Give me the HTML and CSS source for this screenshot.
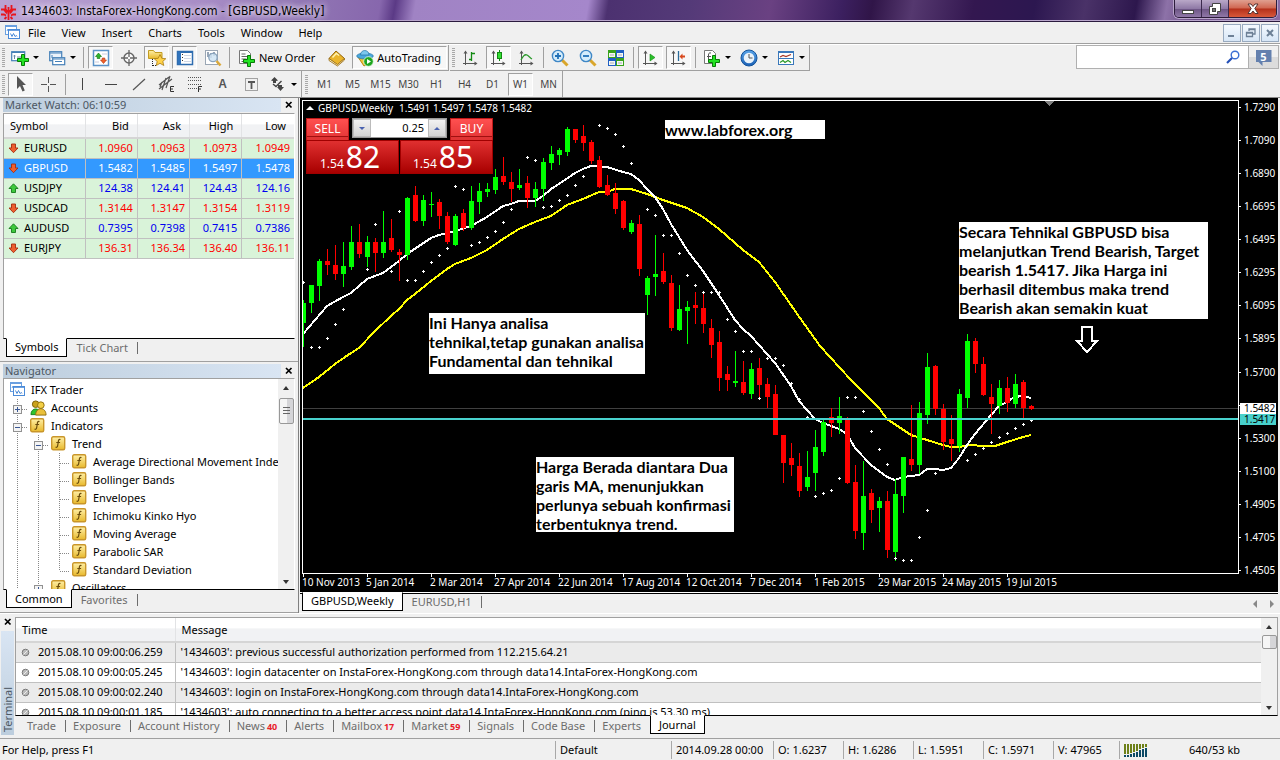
FILE: index.html
```html
<!DOCTYPE html>
<html lang="en">
<head>
<meta charset="utf-8">
<title>1434603: InstaForex-HongKong.com - [GBPUSD,Weekly]</title>
<link rel="stylesheet" href="styles.css">
</head>
<body>
<svg class="defs" aria-hidden="true">
  <defs>
    <linearGradient id="gold" x1="0" y1="0" x2="0" y2="1"><stop offset="0" stop-color="#fff0a8"/><stop offset="1" stop-color="#e8b92c"/></linearGradient>
    <linearGradient id="blue" x1="0" y1="0" x2="0" y2="1"><stop offset="0" stop-color="#5aa5ea"/><stop offset="1" stop-color="#1a5fb4"/></linearGradient>
  </defs>
  <symbol id="i-app" viewBox="0 0 15 15"><rect x=".5" y=".5" width="11" height="9" fill="#fff" stroke="#6ba0e0"/><path d="M1 1.500h10" stroke="#6ba0e0"/><path d="M2 6l1-2 1 2 1-2 1 1" stroke="#6ba0e0" fill="none"/><rect x="3.500" y="4.500" width="11" height="9" fill="#fff" stroke="#4a8ad8"/><path d="M4 5.500h10" stroke="#6ba0e0"/><path d="M5.500 8.500l1.500 3 1.500-3 1.500 3 1.500-1 .5 1" stroke="#4a8ad8" fill="none"/></symbol>
  <symbol id="i-plus" viewBox="0 0 12 12"><path d="M4.500 .5h3v4h4v3h-4v4h-3v-4h-4v-3h4z" fill="#22e322" stroke="#077a07"/></symbol>
  <symbol id="i-newchart" viewBox="0 0 18 18"><rect x=".7" y="2.700" width="13" height="9" fill="#fff" stroke="#4580b8" stroke-width="1.200"/><path d="M1 3.500h12.500" stroke="#4580b8"/><path d="M3.500 10V6M6 8h4M2.500 7h2" stroke="#6a8aa8"/><use href="#i-plus" x="6" y="5" width="12" height="12"/></symbol>
  <symbol id="i-profiles" viewBox="0 0 18 18"><rect x="1.700" y="2.700" width="12" height="9" fill="#eaf2fb" stroke="#4580b8" stroke-width="1.200"/><path d="M2 4h11M4 9V6" stroke="#4580b8"/><rect x="4.700" y="8.700" width="12" height="7" fill="#fff" stroke="#4580b8" stroke-width="1.200"/><path d="M5 10h11M7 12.500h7" stroke="#4580b8"/></symbol>
  <symbol id="i-watch" viewBox="0 0 18 18"><rect x="1.500" y="1.500" width="15" height="15" fill="#fff" stroke="#5b93c8" stroke-width="1.500"/><path d="M10 5h5M3 13h4" stroke="#ccd"/><path d="M6.500 4l3 3.500h-1.700v2h-2.600v-2h-1.700z" fill="#2cb52c" stroke="#0a700a" stroke-width=".6"/><path d="M11.500 14.500l3-3.500h-1.700v-2h-2.600v2h-1.700z" fill="#f0622a" stroke="#b03010" stroke-width=".6"/></symbol>
  <symbol id="i-target" viewBox="0 0 18 18"><circle cx="9" cy="9" r="5" fill="#f8f8f8" stroke="#666" stroke-width="1.400"/><path d="M9 1v7M9 10v7M1 9h7M10 9h7" stroke="#666" stroke-width="1.300"/></symbol>
  <symbol id="i-star" viewBox="0 0 18 18"><path d="M.5 1.500h5l1.500 2h7v6H.5z" fill="url(#gold)" stroke="#c29c22"/><path d="M4.500 10v7M5 16.500h4" stroke="#222" stroke-dasharray="1 1"/><path d="M12 5.500l1.800 3.800 4 .4-3 2.700 1 4.100-3.800-2.200-3.700 2.200.9-4.100-3-2.700 4-.4z" fill="#ffd24a" stroke="#a87b10" stroke-width=".8"/></symbol>
  <symbol id="i-panel" viewBox="0 0 18 18"><rect x="1.500" y="2.500" width="15" height="13" fill="#fff" stroke="#2f6db0" stroke-width="1.500"/><path d="M2 3.500h14" stroke="#2f6db0"/><rect x="2" y="3" width="3" height="12" fill="#2f73bd"/><path d="M8 6.500h7M8 9.500h7M8 12.500h7" stroke="#d0d8e6"/><path d="M6 5.500h1M6 8.500h1M6 11.500h1" stroke="#333"/></symbol>
  <symbol id="i-tester" viewBox="0 0 18 18"><rect x="1.500" y="1.500" width="12" height="14" fill="#fff" stroke="#9aa6b4"/><path d="M4 3v5M7 4v5M10 3v4" stroke="#7789a0" stroke-width="1.500"/><circle cx="9" cy="8.500" r="4.200" fill="#cfe4f5" fill-opacity=".85" stroke="#8aa4bd" stroke-width="1.300"/><path d="M12.500 12l4 4.500" stroke="#dba93a" stroke-width="2.600"/></symbol>
  <symbol id="i-order" viewBox="0 0 18 18"><path d="M1.500 1.500h8l3 3v10h-11z" fill="#fff" stroke="#777"/><path d="M3.500 5h4M3.500 7.500h7M3.500 10h5M3.500 12.500h3" stroke="#666"/><use href="#i-plus" x="5" y="6" width="12" height="12"/></symbol>
  <symbol id="i-book" viewBox="0 0 18 18"><path d="M1 9.500l7-7.500 8.500 7.500-7 6.500z" fill="#eab52c" stroke="#94650c"/><path d="M1 9.500v2l8.500 5.500 7-6v-1.500l-7 6z" fill="#fff0b5" stroke="#94650c" stroke-width=".8"/><path d="M4.500 8.500l3.800-4 2.800 2" stroke="#fff3b0" fill="none" stroke-width="1.500"/></symbol>
  <symbol id="i-auto" viewBox="0 0 18 18"><path d="M2 8l6 9 7-4V7z" fill="#f1c53b" stroke="#b8870f"/><ellipse cx="9" cy="7" rx="8.300" ry="3" fill="#4aa8dd" stroke="#2273a5" stroke-width=".7"/><path d="M4.500 6c0-6 8.500-6 8.500 0z" fill="#7cc8ee" stroke="#2273a5" stroke-width=".7"/><circle cx="12.500" cy="12.500" r="4.800" fill="#1ea51e" stroke="#eafbe8" stroke-width=".8"/><path d="M11 10v5l4-2.500z" fill="#fff"/></symbol>
  <symbol id="i-axes" viewBox="0 0 18 18"><path d="M4.500 3v13M2 14.500h13" stroke="#555"/><path d="M4.500 1.500l-2 3h4zM16.500 14.500l-3-2v4z" fill="#555"/></symbol>
  <symbol id="i-bars" viewBox="0 0 18 18"><use href="#i-axes"/><path d="M10.500 3v9M11 4.500h3M8 10.500h2" stroke="#128a12" stroke-width="1.300"/></symbol>
  <symbol id="i-candle" viewBox="0 0 18 18"><use href="#i-axes"/><path d="M10.500 1v11" stroke="#128a12"/><rect x="8.500" y="3.500" width="4" height="6" fill="#33dd33" stroke="#128a12"/></symbol>
  <symbol id="i-line" viewBox="0 0 18 18"><use href="#i-axes"/><path d="M4 11c2-4 4-6 6-5s3 3 5 4" fill="none" stroke="#2b992b" stroke-width="1.300"/></symbol>
  <symbol id="i-zoomin" viewBox="0 0 18 18"><path d="M11 11l5.500 5.500" stroke="#d9a62c" stroke-width="3"/><circle cx="7" cy="7" r="5.600" fill="#d4ecfb" stroke="#3f87c6" stroke-width="1.400"/><path d="M4 7h6M7 4v6" stroke="#2171b8" stroke-width="1.800"/></symbol>
  <symbol id="i-zoomout" viewBox="0 0 18 18"><path d="M11 11l5.500 5.500" stroke="#d9a62c" stroke-width="3"/><circle cx="7" cy="7" r="5.600" fill="#d4ecfb" stroke="#3f87c6" stroke-width="1.400"/><path d="M4 7h6" stroke="#2171b8" stroke-width="1.800"/></symbol>
  <symbol id="i-tile" viewBox="0 0 18 18"><path d="M1 1h8v8H1zM9 9h8v8H9z" fill="#38a31d"/><path d="M9 1h8v8H9zM1 9h8v8H1z" fill="#1f5fc4"/><path d="M2 4h6v4H2zM10 4h6v4h-6zM2 12h6v4H2zM10 12h6v4h-6z" fill="#f4f8f4"/><path d="M3 6h4M11 6h4M3 14h4M11 14h4" stroke="#aab"/></symbol>
  <symbol id="i-scroll" viewBox="0 0 18 18"><use href="#i-axes"/><path d="M9 5v7l5-3.500z" fill="#2bc02b" stroke="#128a12" stroke-width=".6"/></symbol>
  <symbol id="i-shift" viewBox="0 0 18 18"><use href="#i-axes"/><path d="M9.500 2v10" stroke="#2a6b9a" stroke-width="1.300"/><path d="M10.500 7.500l3-3v2h2.500v2h-2.500v2z" fill="#d8481c"/></symbol>
  <symbol id="i-indic" viewBox="0 0 18 18"><path d="M1.500 1.500h8l3 3v10h-11z" fill="#fff" stroke="#777"/><path d="M8 4c-2-.5-2.500.5-2.500 2v5M4 7.500h4" stroke="#555" fill="none"/><use href="#i-plus" x="5" y="6" width="12" height="12"/></symbol>
  <symbol id="i-clock" viewBox="0 0 18 18"><circle cx="9" cy="9" r="8" fill="url(#blue)" stroke="#14549c"/><circle cx="9" cy="9" r="5.300" fill="#eaf3fb"/><path d="M9 5v4h3.500" stroke="#555" fill="none"/></symbol>
  <symbol id="i-templ" viewBox="0 0 18 18"><rect x="1.500" y="2.500" width="15" height="13" fill="#fff" stroke="#3a78bb"/><path d="M1 3.500h16M2 9.500h14" stroke="#3a78bb"/><path d="M3 8l3-1.500 3 1 5-2" stroke="#a83a2a" stroke-width="1.200" fill="none"/><path d="M3 13.500l3-2 2 2 3-2 3 2" stroke="#2b992b" stroke-width="1.200" fill="none"/></symbol>
  <symbol id="i-cursor" viewBox="0 0 18 18"><path d="M5 1v13l3-3 2.500 5.500 2.300-1L10.500 10H14z" fill="#555"/></symbol>
  <symbol id="i-cross" viewBox="0 0 18 18"><path d="M8.500 2v6M8.500 11v6M1 9.500h6M10 9.500h6" stroke="#555"/></symbol>
  <symbol id="i-vline" viewBox="0 0 18 18"><path d="M8.500 3v12" stroke="#444"/></symbol>
  <symbol id="i-hline" viewBox="0 0 18 18"><path d="M3 9.500h12" stroke="#444"/></symbol>
  <symbol id="i-trend" viewBox="0 0 18 18"><path d="M3 15L15 4" stroke="#555" stroke-width="1.200"/></symbol>
  <symbol id="i-channel" viewBox="0 0 18 18"><path d="M1 10L11 2M1 14L14 4M4 15l4-12M8 13l4-12M2 12l2-5" stroke="#555" stroke-width="1.200"/><path d="M16 11.500h-3.500v5H16M12.500 14H15" fill="none" stroke="#333"/></symbol>
  <symbol id="i-fibo" viewBox="0 0 18 18"><path d="M2 2.500h14M2 5.500h14M2 9.500h14M2 13.500h9" stroke="#555" stroke-dasharray="1 1"/><path d="M12.500 17v-5.500H16M12.500 14H15" fill="none" stroke="#333"/></symbol>
  <symbol id="i-label" viewBox="0 0 18 18"><rect x="3.500" y="3.500" width="12" height="12" fill="none" stroke="#555" stroke-dasharray="1 1"/><path d="M6 7h7M9.500 7v7" stroke="#555" stroke-width="1.800"/></symbol>
  <symbol id="i-arrows" viewBox="0 0 18 18"><path d="M2 5.500L5.500 2 9 5.500 7 6v2H4V6zM8 12h1v-2h4v2h2l-3.500 4z" fill="#444"/><path d="M4 9l3 2.500L12.500 6" stroke="#444" stroke-width="1.400" fill="none"/></symbol>
  <symbol id="i-up" viewBox="0 0 11 11"><path d="M5.500 .8l4.500 4.700H7.500v4h-4v-4H1z" fill="#3ec93e" stroke="#14781a" stroke-width=".9"/></symbol>
  <symbol id="i-down" viewBox="0 0 11 11"><path d="M5.500 9.700L1 5h2.500V1h4v4H10z" fill="#ee6030" stroke="#a52c10" stroke-width=".9"/></symbol>
  <symbol id="i-fx" viewBox="0 0 15 15"><rect x=".7" y=".7" width="13" height="13" rx="1.500" fill="url(#gold)" stroke="#c9962a" stroke-width="1.400"/><path d="M9.500 3.500c-2-.6-2 1-2.300 3L6.600 10c-.2 1-.8 1.500-2 1.200M5.300 6.500h3.800" stroke="#6b4d0c" stroke-width="1.200" fill="none"/></symbol>
  <symbol id="i-people" viewBox="0 0 18 16"><circle cx="6" cy="4" r="3.500" fill="#c9a21c" stroke="#7a5c08"/><path d="M1 15c0-8 10-8 10 0z" fill="#2ec42e" stroke="#11801a"/><circle cx="11.500" cy="5" r="3.500" fill="#f3cf45" stroke="#8f6d0e"/><path d="M6 15.500c0-9 11-9 11 0z" fill="#eac03a" stroke="#8f6d0e"/></symbol>
  <symbol id="g-line" viewBox="0 0 21 18"><path d="M10.500 0v18" stroke="#888" stroke-dasharray="1 1"/></symbol>
  <symbol id="g-tee" viewBox="0 0 21 18"><path d="M10.500 0v18M11 10.500h10" stroke="#888" stroke-dasharray="1 1"/></symbol>
  <symbol id="g-end" viewBox="0 0 21 18"><path d="M10.500 0v10M11 10.500h10" stroke="#888" stroke-dasharray="1 1"/></symbol>
  <symbol id="g-minus" viewBox="0 0 21 18"><use href="#g-tee"/><rect x="6.500" y="6.500" width="8" height="8" fill="#f4f4f4" stroke="#919191"/><path d="M8 10.500h5" stroke="#3a5794"/></symbol>
  <symbol id="g-plus" viewBox="0 0 21 18"><use href="#g-minus"/><path d="M10.500 8v5" stroke="#3a5794"/></symbol>
  <symbol id="i-dot" viewBox="0 0 9 9"><circle cx="4.500" cy="4.500" r="3.300" fill="#bbb" stroke="#777"/><path d="M2.500 6.500l4-4" stroke="#eee"/></symbol>
  <symbol id="i-x" viewBox="0 0 8 8"><path d="M1 1l5.500 5.500M6.500 1L1 6.500" stroke="currentColor" stroke-width="1.700"/></symbol>
</svg>

<div class="app">
  <header class="titlebar">
    <svg class="logo" viewBox="0 0 18 18"><path d="M8.500 5v13M5.500 3v4l2 3M11.500 3v4l-2 3M1 7.500h3l3 4M16 7.500h-3l-3 4M1 12.500h3l2 1M16 12.500h-3l-2 1M4.500 17l2-2M12.500 17l-2-2" fill="none" stroke="#e8151c" stroke-width="1.800"/></svg>
    <h1>1434603: InstaForex-HongKong.com - [GBPUSD,Weekly]</h1>
    <div class="wincontrols">
      <button type="button" aria-label="Minimize"><svg viewBox="0 0 12 12"><rect x=".5" y="7.500" width="11" height="3" fill="#fff" stroke="#444"/></svg></button>
      <button type="button" aria-label="Restore"><svg viewBox="0 0 12 12"><path d="M3.500 .5h8v8h-3v3h-8v-8h3z" fill="#fff" stroke="#444"/><rect x="3.500" y="5.500" width="3" height="3" fill="#777" stroke="#444"/></svg></button>
      <button type="button" class="close" aria-label="Close"><svg viewBox="0 0 12 12"><path d="M1 1l3 0 2 2.500L8 1h3L7.800 5.500 11 10.500H8L6 8l-2 2.500H1l3.200-5z" fill="#fff" stroke="#533"/></svg></button>
    </div>
  </header>

  <nav class="menubar">
    <svg class="mdi-icon"><use href="#i-app"/></svg>
    <button type="button">File</button><button type="button">View</button><button type="button">Insert</button><button type="button">Charts</button><button type="button">Tools</button><button type="button">Window</button><button type="button">Help</button>
    <div class="mdi">
      <button type="button" aria-label="Minimize chart"><svg viewBox="0 0 12 12"><path d="M2 9h6" stroke="#6d8096" stroke-width="2"/></svg></button>
      <button type="button" aria-label="Restore chart"><svg viewBox="0 0 12 12"><path d="M4 4V2h6v5H8M4 2.500h6" fill="none" stroke="#6d8096" stroke-width="1.300"/><path d="M1.500 5.500h6v4h-6zM2 6h5" fill="none" stroke="#6d8096" stroke-width="1.300"/></svg></button>
      <button type="button" aria-label="Close chart"><svg viewBox="0 0 12 12"><path d="M3 3l6 6M9 3l-6 6" stroke="#6d8096" stroke-width="2"/></svg></button>
    </div>
  </nav>

  <div class="toolbars">
    <div class="toolrow">
      <div class="toolbar" role="toolbar" aria-label="Standard">
        <i class="grip"></i>
        <button type="button" class="tb drop" aria-label="New chart"><svg><use href="#i-newchart"/></svg></button>
        <button type="button" class="tb drop" aria-label="Profiles"><svg><use href="#i-profiles"/></svg></button>
        <i class="sep"></i>
        <button type="button" class="tb on" aria-label="Market Watch"><svg><use href="#i-watch"/></svg></button>
        <button type="button" class="tb" aria-label="Data Window"><svg><use href="#i-target"/></svg></button>
        <button type="button" class="tb on" aria-label="Navigator"><svg><use href="#i-star"/></svg></button>
        <button type="button" class="tb on" aria-label="Terminal"><svg><use href="#i-panel"/></svg></button>
        <button type="button" class="tb" aria-label="Strategy Tester"><svg><use href="#i-tester"/></svg></button>
        <i class="sep"></i>
        <button type="button" class="tb text"><svg><use href="#i-order"/></svg>New Order</button>
        <button type="button" class="tb" aria-label="MetaEditor"><svg><use href="#i-book"/></svg></button>
        <button type="button" class="tb text on"><svg><use href="#i-auto"/></svg>AutoTrading</button>
      </div>
      <div class="toolbar" role="toolbar" aria-label="Charts">
        <i class="grip"></i>
        <button type="button" class="tb" aria-label="Bar chart"><svg><use href="#i-bars"/></svg></button>
        <button type="button" class="tb on" aria-label="Candlesticks"><svg><use href="#i-candle"/></svg></button>
        <button type="button" class="tb" aria-label="Line chart"><svg><use href="#i-line"/></svg></button>
        <i class="sep"></i>
        <button type="button" class="tb" aria-label="Zoom in"><svg><use href="#i-zoomin"/></svg></button>
        <button type="button" class="tb" aria-label="Zoom out"><svg><use href="#i-zoomout"/></svg></button>
        <button type="button" class="tb" aria-label="Tile windows"><svg><use href="#i-tile"/></svg></button>
        <i class="sep"></i>
        <button type="button" class="tb on" aria-label="Auto scroll"><svg><use href="#i-scroll"/></svg></button>
        <button type="button" class="tb on" aria-label="Chart shift"><svg><use href="#i-shift"/></svg></button>
        <i class="sep"></i>
        <button type="button" class="tb drop" aria-label="Indicators"><svg><use href="#i-indic"/></svg></button>
        <button type="button" class="tb drop" aria-label="Periods"><svg><use href="#i-clock"/></svg></button>
        <button type="button" class="tb drop" aria-label="Templates"><svg><use href="#i-templ"/></svg></button>
      </div>
      <form class="search">
        <input type="text" aria-label="Search">
        <button type="button" class="find" aria-label="Find"><svg viewBox="0 0 14 14"><circle cx="9" cy="5" r="3.800" fill="#fff" stroke="#3b6fd4" stroke-width="1.400"/><path d="M6 8l-5 5" stroke="#2450b8" stroke-width="2.200"/></svg></button>
        <button type="button" class="chat"><span>5</span></button>
      </form>
    </div>
    <div class="toolrow">
      <div class="toolbar" role="toolbar" aria-label="Line studies">
        <i class="grip"></i>
        <button type="button" class="tb on" aria-label="Cursor"><svg><use href="#i-cursor"/></svg></button>
        <button type="button" class="tb" aria-label="Crosshair"><svg><use href="#i-cross"/></svg></button>
        <i class="sep"></i>
        <button type="button" class="tb" aria-label="Vertical line"><svg><use href="#i-vline"/></svg></button>
        <button type="button" class="tb" aria-label="Horizontal line"><svg><use href="#i-hline"/></svg></button>
        <button type="button" class="tb" aria-label="Trendline"><svg><use href="#i-trend"/></svg></button>
        <button type="button" class="tb" aria-label="Equidistant channel"><svg><use href="#i-channel"/></svg></button>
        <button type="button" class="tb" aria-label="Fibonacci retracement"><svg><use href="#i-fibo"/></svg></button>
        <button type="button" class="tb letter">A</button>
        <button type="button" class="tb" aria-label="Text label"><svg><use href="#i-label"/></svg></button>
        <button type="button" class="tb drop" aria-label="Arrows"><svg><use href="#i-arrows"/></svg></button>
      </div>
      <div class="toolbar periods" role="toolbar" aria-label="Periodicity">
        <i class="grip"></i>
        <button type="button" class="tb">M1</button><button type="button" class="tb">M5</button><button type="button" class="tb">M15</button><button type="button" class="tb">M30</button><button type="button" class="tb">H1</button><button type="button" class="tb">H4</button><button type="button" class="tb">D1</button><button type="button" class="tb on">W1</button><button type="button" class="tb">MN</button>
      </div>
    </div>
  </div>

  <main class="workspace">
    <aside class="side">
      <section class="panel watch">
        <header class="panel-head"><h2>Market Watch: 06:10:59</h2><button type="button" aria-label="Close Market Watch"><svg><use href="#i-x"/></svg></button></header>
        <div class="panel-body">
          <table class="quotes">
            <thead><tr><th>Symbol</th><th>Bid</th><th>Ask</th><th>High</th><th>Low</th></tr></thead>
            <tbody>
              <tr class="dn"><td><svg><use href="#i-down"/></svg>EURUSD</td><td>1.0960</td><td>1.0963</td><td>1.0973</td><td>1.0949</td></tr>
              <tr class="sel"><td><svg><use href="#i-down"/></svg>GBPUSD</td><td>1.5482</td><td>1.5485</td><td>1.5497</td><td>1.5478</td></tr>
              <tr class="up"><td><svg><use href="#i-up"/></svg>USDJPY</td><td>124.38</td><td>124.41</td><td>124.43</td><td>124.16</td></tr>
              <tr class="dn"><td><svg><use href="#i-down"/></svg>USDCAD</td><td>1.3144</td><td>1.3147</td><td>1.3154</td><td>1.3119</td></tr>
              <tr class="up"><td><svg><use href="#i-up"/></svg>AUDUSD</td><td>0.7395</td><td>0.7398</td><td>0.7415</td><td>0.7386</td></tr>
              <tr class="dn"><td><svg><use href="#i-down"/></svg>EURJPY</td><td>136.31</td><td>136.34</td><td>136.40</td><td>136.11</td></tr>
            </tbody>
          </table>
        </div>
        <div class="tabs"><button type="button" class="active">Symbols</button><button type="button">Tick Chart</button></div>
      </section>
      <section class="panel navigator">
        <header class="panel-head"><h2>Navigator</h2><button type="button" aria-label="Close Navigator"><svg><use href="#i-x"/></svg></button></header>
        <div class="panel-body">
          <ul class="tree">
            <li><svg class="ico"><use href="#i-app"/></svg>IFX Trader</li>
            <li><svg class="g"><use href="#g-plus"/></svg><svg class="ico people"><use href="#i-people"/></svg>Accounts</li>
            <li><svg class="g"><use href="#g-minus"/></svg><svg class="ico"><use href="#i-fx"/></svg>Indicators</li>
            <li><svg class="g"><use href="#g-line"/></svg><svg class="g"><use href="#g-minus"/></svg><svg class="ico"><use href="#i-fx"/></svg>Trend</li>
            <li><svg class="g"><use href="#g-line"/></svg><svg class="g"><use href="#g-line"/></svg><svg class="g"><use href="#g-tee"/></svg><svg class="ico"><use href="#i-fx"/></svg>Average Directional Movement Index</li>
            <li><svg class="g"><use href="#g-line"/></svg><svg class="g"><use href="#g-line"/></svg><svg class="g"><use href="#g-tee"/></svg><svg class="ico"><use href="#i-fx"/></svg>Bollinger Bands</li>
            <li><svg class="g"><use href="#g-line"/></svg><svg class="g"><use href="#g-line"/></svg><svg class="g"><use href="#g-tee"/></svg><svg class="ico"><use href="#i-fx"/></svg>Envelopes</li>
            <li><svg class="g"><use href="#g-line"/></svg><svg class="g"><use href="#g-line"/></svg><svg class="g"><use href="#g-tee"/></svg><svg class="ico"><use href="#i-fx"/></svg>Ichimoku Kinko Hyo</li>
            <li><svg class="g"><use href="#g-line"/></svg><svg class="g"><use href="#g-line"/></svg><svg class="g"><use href="#g-tee"/></svg><svg class="ico"><use href="#i-fx"/></svg>Moving Average</li>
            <li><svg class="g"><use href="#g-line"/></svg><svg class="g"><use href="#g-line"/></svg><svg class="g"><use href="#g-tee"/></svg><svg class="ico"><use href="#i-fx"/></svg>Parabolic SAR</li>
            <li><svg class="g"><use href="#g-line"/></svg><svg class="g"><use href="#g-line"/></svg><svg class="g"><use href="#g-end"/></svg><svg class="ico"><use href="#i-fx"/></svg>Standard Deviation</li>
            <li><svg class="g"><use href="#g-line"/></svg><svg class="g"><use href="#g-plus"/></svg><svg class="ico"><use href="#i-fx"/></svg>Oscillators</li>
          </ul>
          <div class="scrollbar"><i class="arr up"></i><i class="thumb tall"></i><i class="arr down"></i></div>
        </div>
        <div class="tabs"><button type="button" class="active">Common</button><button type="button">Favorites</button></div>
      </section>
    </aside>

    <section class="chart">
      <div class="frame">
        <div class="plot">
          <svg id="series" class="series"></svg>
          <div class="caption"><span>GBPUSD,Weekly</span><span>1.5491 1.5497 1.5478 1.5482</span></div>
          <div class="trade">
            <button type="button" class="side-btn">SELL</button>
            <div class="lots"><button type="button" aria-label="Decrease volume"><i class="arr down"></i></button><input type="text" value="0.25" aria-label="Volume"><button type="button" aria-label="Increase volume"><i class="arr up"></i></button></div>
            <button type="button" class="side-btn">BUY</button>
            <button type="button" class="price"><span>1.54</span><b>82</b></button>
            <button type="button" class="price"><span>1.54</span><b>85</b></button>
          </div>
          <p class="note n1">www.labforex.org</p>
          <p class="note n2">Ini Hanya analisa<br>tehnikal,tetap gunakan analisa<br>Fundamental dan tehnikal</p>
          <p class="note n3">Harga Berada diantara Dua<br>garis MA, menunjukkan<br>perlunya sebuah konfirmasi<br>terbentuknya trend.</p>
          <p class="note n4">Secara Tehnikal GBPUSD bisa<br>melanjutkan Trend Bearish, Target<br>bearish 1.5417. Jika Harga ini<br>berhasil ditembus maka trend<br>Bearish akan semakin kuat</p>
        </div>
        <div class="prices">
          <span>1.7290</span><span>1.7090</span><span>1.6890</span><span>1.6695</span><span>1.6495</span><span>1.6295</span><span>1.6095</span><span>1.5895</span><span>1.5700</span><span>&nbsp;</span><span>1.5300</span><span>1.5100</span><span>1.4905</span><span>1.4705</span><span>1.4505</span>
          <div class="tags"><b>1.5482</b><b class="level">1.5417</b></div>
        </div>
        <div class="dates"><span>10 Nov 2013</span><span>5 Jan 2014</span><span>2 Mar 2014</span><span>27 Apr 2014</span><span>22 Jun 2014</span><span>17 Aug 2014</span><span>12 Oct 2014</span><span>7 Dec 2014</span><span>1 Feb 2015</span><span>29 Mar 2015</span><span>24 May 2015</span><span>19 Jul 2015</span></div>
      </div>
      <div class="tabs"><button type="button" class="active">GBPUSD,Weekly</button><button type="button">EURUSD,H1</button><span class="pager"><i class="arr left"></i><i class="arr right"></i></span></div>
    </section>
  </main>

  <section class="terminal">
    <div class="strip"><button type="button" aria-label="Close Terminal"><svg><use href="#i-x"/></svg></button><h2>Terminal</h2></div>
    <div class="term-main">
      <div class="term-body">
        <div class="log-wrap">
          <table class="log">
            <thead><tr><th>Time</th><th>Message</th></tr></thead>
            <tbody>
              <tr><td><svg><use href="#i-dot"/></svg>2015.08.10 09:00:06.259</td><td>'1434603': previous successful authorization performed from 112.215.64.21</td></tr>
              <tr><td><svg><use href="#i-dot"/></svg>2015.08.10 09:00:05.245</td><td>'1434603': login datacenter on InstaForex-HongKong.com through data14.IntaForex-HongKong.com</td></tr>
              <tr><td><svg><use href="#i-dot"/></svg>2015.08.10 09:00:02.240</td><td>'1434603': login on InstaForex-HongKong.com through data14.IntaForex-HongKong.com</td></tr>
              <tr><td><svg><use href="#i-dot"/></svg>2015.08.10 09:00:01.185</td><td>'1434603': auto connecting to a better access point data14.IntaForex-HongKong.com (ping is 53.30 ms)</td></tr>
            </tbody>
          </table>
        </div>
        <div class="scrollbar"><i class="arr up"></i><i class="thumb"></i><i class="arr down"></i></div>
      </div>
      <div class="tabs"><button type="button">Trade</button><button type="button">Exposure</button><button type="button">Account History</button><button type="button">News <b>40</b></button><button type="button">Alerts</button><button type="button">Mailbox <b>17</b></button><button type="button">Market <b>59</b></button><button type="button">Signals</button><button type="button">Code Base</button><button type="button">Experts</button><button type="button" class="active">Journal</button></div>
    </div>
  </section>

  <footer class="status">
    <span class="help">For Help, press F1</span><span class="c1">Default</span><span class="c2">2014.09.28 00:00</span><span class="c3">O: 1.6237</span><span class="c3">H: 1.6286</span><span class="c3">L: 1.5951</span><span class="c3">C: 1.5971</span><span class="c4">V: 47965</span>
    <span class="net"><svg viewBox="0 0 24 14" shape-rendering="crispEdges"><path d="M1 1v10M4 1v10M7 1v9M10 1v8M13 1v7M16 1v5M19 1v4M22 1v3" stroke="#6d8018" stroke-width="2"/><path d="M1 12v2M4 12v2M7 11v3M10 10v4M13 9v5M16 7v7M19 6v8M22 5v9" stroke="#0d4a66" stroke-width="2"/></svg>640/53 kb</span>
  </footer>
</div>
<script src="chart.js"></script>
</body>
</html>
```
FILE: styles.css
```css
* { box-sizing: border-box; }
body { margin: 0; background: #f0f0f0; color: #000; font: 11px/14px "Noto Sans", sans-serif; }
h1, h2, p, ul { margin: 0; padding: 0; font-weight: normal; font-size: inherit; }
button, input { font: inherit; color: inherit; margin: 0; padding: 0; border: 0; background: none; white-space: nowrap; }
svg { display: block; flex: none; }
.defs { position: absolute; width: 0; height: 0; }
.app { display: flex; flex-direction: column; height: 100vh; min-height: 600px; overflow: hidden; }

.titlebar { display: flex; align-items: center; height: 22px; flex: none; border-bottom: 1px solid #2b1b3f; box-shadow: inset 0 -1px #b9a6cc;
  background: linear-gradient(100deg, #b9a2d2 0, #a88dc6 200px, #9176b4 300px, #8767ad 375px, #5b3a86 390px, #a083c4 410px, #a587cb 580px, #4c3170 600px, #543a78 680px, #6a4182 760px, #3c2060 830px, #301548 860px, #55386f 900px, #331750 960px, #2c1750 1020px, #4a3268 1070px, #2d174d 1120px, #8d72a8 1150px, #6c4d86 1180px, #8a6ca5 100%); }
.logo { width: 18px; height: 18px; }
.titlebar h1 { padding-left: 3px; font: 12px/20px "DejaVu Sans Condensed", "Noto Sans", sans-serif; text-shadow: 0 0 6px #fff, 0 0 6px #e8dcf4; }
.wincontrols { display: flex; align-self: flex-start; margin-left: auto; margin-right: 3px; height: 18px; border: 1px solid #2d1d3c; border-top: 0; border-radius: 0 0 5px 5px; overflow: hidden; box-shadow: 0 0 0 1px #b8a4ca; }
.wincontrols button { display: grid; place-items: center; width: 27px; background: linear-gradient(#b9a8c8, #8f7aa6 50%, #6c5484 52%, #9078a8); border-right: 1px solid #3b2a4d; }
.wincontrols .close { width: 47px; border: 0; background: linear-gradient(#e0a090, #d06650 48%, #b4301a 52%, #d8583a); }
.wincontrols svg { width: 12px; height: 12px; }

.menubar { display: flex; align-items: center; height: 22px; flex: none; padding-left: 5px; border-bottom: 1px solid #a0a0a0; }
.mdi-icon { width: 15px; height: 15px; }
.menubar > button { padding: 0 8px; }
.mdi { display: flex; gap: 1px; margin-left: auto; margin-right: 1px; }
.mdi button { display: grid; place-items: center; width: 18px; height: 18px; border: 1px solid #98aabf; background: linear-gradient(#f4f9fe, #d7e6f6); }
.mdi svg { width: 12px; height: 12px; }

.toolbars { flex: none; border-bottom: 1px solid #8a8a8a; border-top: 1px solid #fff; }
.toolrow { display: flex; height: 26px; }
.toolbar { display: flex; align-items: center; gap: 3px; padding: 0 1px 0 2px; border-right: 1px solid #a0a0a0; border-bottom: 1px solid #a0a0a0; margin-right: 1px; }
.toolrow + .toolrow .toolbar { border-bottom: 0; }
.grip { width: 3px; height: 19px; background: repeating-linear-gradient(#a8a8a8 0 1px, #f0f0f0 1px 2px); }
.sep { width: 1px; height: 21px; margin: 0 1px; background: #a0a0a0; }
.tb { display: flex; align-items: center; justify-content: center; width: 25px; height: 23px; border: 1px solid transparent; }
.tb svg { width: 18px; height: 18px; }
.tb.on { background: #f7f7f7; border-color: #a0a0a0 #fff #fff #a0a0a0; }
.tb.drop { width: 34px; gap: 4px; }
.tb.drop::after { content: ""; border: 3px solid transparent; border-top-color: #000; border-bottom: 0; }
.tb.text { width: auto; gap: 3px; padding: 0 5px 0 3px; }
.tb.letter { color: #555; font: bold 12px/14px "Liberation Sans", sans-serif; }
.periods .tb { color: #444; font-size: 10px; }
.periods .grip { margin-right: 1px; }
.search { display: flex; width: 203px; height: 24px; margin: 0 1px 0 auto; border: 1px solid #b0b0b0; background: #fff; }
.search input { flex: 1; min-width: 0; outline: 0; padding: 0 4px; }
.find { width: 22px; }
.find svg { width: 14px; height: 14px; }
.chat { display: flex; justify-content: center; align-items: flex-start; width: 30px; padding-top: 4px; border-left: 1px solid #b0b0b0; background: linear-gradient(#f0f0f0 50%, #dcdcdc 50%); }
.chat span { width: 16px; height: 16px; background: #6480ae; color: #fff; font-weight: bold; line-height: 13px; clip-path: polygon(0 0, 100% 0, 100% 12px, 7px 12px, 7px 16px, 3px 12px, 0 12px); }

.workspace { display: flex; flex: 1; min-height: 0; border-bottom: 1px solid #fff; }
.side { display: flex; flex-direction: column; width: 299px; flex: none; border-right: 1px solid #808080; }
.panel { display: flex; flex-direction: column; min-height: 0; padding: 0 3px; border-bottom: 1px solid #a0a0a0; }
.watch { flex: 265 1 0; }
.navigator { flex: 250 1 0; padding-top: 2px; }
.panel-head { display: flex; align-items: center; justify-content: space-between; height: 14px; flex: none; }
.watch .panel-head { margin-bottom: 1px; }
.panel-head h2 { flex: 1; padding-left: 2px; margin-right: 4px; color: #4c5763; line-height: 14px; background: linear-gradient(90deg, #bccddd, #d9e5f3); }
.panel-head button, .strip button { width: 8px; height: 8px; margin-right: 2px; }
.panel-head svg, .strip svg { width: 8px; height: 8px; }
.panel-body { display: flex; flex: 1; min-height: 0; overflow: hidden; background: #fff; border: 1px solid #a0a0a0; border-right-color: #fff; border-bottom: 1px solid #000; }
.quotes, .log { border-collapse: collapse; table-layout: fixed; width: 100%; align-self: flex-start; }
th { height: 24px; padding: 0 8px 0 0; font-weight: normal; text-align: right; background: linear-gradient(#fff 45%, #f1f2f4 46%); border-right: 1px solid #e2e3e5; border-bottom: 2px solid #d5d5d5; }
th:first-child, .log th { text-align: left; padding-left: 6px; }
td { height: 20px; padding: 0; overflow: hidden; white-space: nowrap; border-right: 1px solid #c0c0c0; border-bottom: 1px solid #c0c0c0; }
td:last-child, th:last-child { border-right: 0; }
.quotes th:first-child { width: 81px; }
.quotes td { text-align: right; padding-right: 4px; background: #d9f3d9; }
.quotes td:first-child { text-align: left; color: #000; }
td svg { display: inline-block; vertical-align: -2px; width: 11px; height: 11px; margin: 0 5px 0 4px; }
.up td { color: #0000f0; }
.dn td { color: #f00; }
.quotes .sel td, .quotes .sel td:first-child { background: #3399ff; color: #fff; }

.tabs { display: flex; align-items: center; height: 22px; flex: none; padding-left: 3px; color: #6d6d6d; }
.tabs button { display: flex; align-items: center; height: 18px; margin-top: -3px; padding: 0 9px 0 8px; }
.tabs button:not(.active)::after { content: ""; width: 1px; height: 12px; margin: 0 -10px 0 9px; background: #6d6d6d; }
.tabs .active { height: 19px; margin-top: -5px; padding: 0 8px; color: #000; background: #fff; border: 1px solid #000; border-top-color: #fff; }
.tabs .active + button { padding-left: 9px; }

.tree { flex: 1; min-width: 0; list-style: none; padding: 2px 0 0 6px; overflow: hidden; }
.tree li { display: flex; align-items: center; height: 18px; overflow: hidden; white-space: nowrap; }
.g { width: 21px; height: 18px; }
.g:first-child { margin-left: -3px; }
.ico { width: 15px; height: 15px; margin-right: 6px; }
.ico.people { width: 17px; height: 16px; margin-right: 4px; }
.g + .ico { margin-left: 2px; }
.scrollbar { display: flex; flex-direction: column; align-items: center; width: 16px; flex: none; background: #f0f0f0; padding: 7px 0 5px; }
.scrollbar .arr.down { margin-top: auto; }
.arr { width: 0; height: 0; border: 4px solid transparent; }
.arr.up { border-bottom-color: #333; border-top: 0; }
.arr.down { border-top-color: #333; border-bottom: 0; }
.scrollbar .arr { border-left-width: 3px; border-right-width: 3px; }
.arr.left { border-right-color: #888; border-left: 0; }
.arr.right { border-left-color: #888; border-right: 0; }
.thumb { width: 15px; height: 14px; margin-top: 6px; border: 1px solid #989898; border-radius: 2px; background: linear-gradient(90deg, #f5f5f5 50%, #d5d5d8 52%); }
.thumb.tall { height: 26px; margin-top: 8px; background: repeating-linear-gradient(#666 0 1px, transparent 1px 3px) 3px 8px / 7px 9px no-repeat, linear-gradient(90deg, #f5f5f5 50%, #d5d5d8 52%); }

.chart { display: flex; flex-direction: column; flex: 1; min-width: 0; margin-left: 1px; margin-right: 2px; }
.frame { display: grid; grid-template: minmax(0, 1fr) 18px / minmax(0, 1fr) 39px; flex: 1; min-height: 0; padding: 2px 0 0 2px; background: #000; color: #fff; font-size: 10px; box-shadow: 0 1px #fff, 0 2px #000; }
.plot { position: relative; overflow: hidden; border: 1px solid #fff; font-size: 11px; }
.series { position: absolute; inset: 0; width: 100%; height: 100%; shape-rendering: crispEdges; }
.caption { position: absolute; left: 3px; top: 0; display: flex; align-items: center; gap: 6px; font-size: 10px; }
.caption::before { content: ""; border: 4px solid transparent; border-bottom-color: #fff; border-top: 0; margin-right: -2px; }
.trade { position: absolute; left: 3px; top: 17px; display: grid; grid-template: 22px 34px / 43px 101px 43px; width: 187px; color: #fff; }
.side-btn { padding-bottom: 2px; background: linear-gradient(#ff5050, #e23434); font-size: 12px; border: 1px solid #c01818; border-bottom: 0; box-shadow: inset 0 -3px #e03434, inset 0 -4px #a01010; }
.lots { display: flex; height: 20px; margin: 0 3px; border: 1px solid #999; background: #fff; color: #000; }
.lots button { display: grid; place-items: center; width: 18px; background: linear-gradient(#f2f2f2, #d4d4d4); border: 1px solid #bbb; }
.lots .arr { border-width: 3px; }
.lots .arr.down { border-top-color: #4a62b0; border-bottom: 0; }
.lots .arr.up { border-bottom-color: #4a62b0; border-top: 0; }
.lots input { flex: 1; min-width: 0; text-align: right; padding-right: 4px; }
.price { grid-row: 2; grid-column: 1 / 3; display: flex; align-items: baseline; gap: 2px; width: 93px; padding-left: 13px; background: linear-gradient(#e03030, #a80000); border: 1px solid #a00000; font-size: 12px; line-height: 32px; }
.price + .price { grid-column: 2 / 4; justify-self: end; padding-left: 12px; }
.price b { font-weight: normal; font-size: 30px; }
.note { position: absolute; background: #fff; color: #000; font: bold 16px/19px Lato, sans-serif; white-space: nowrap; }
.n1 { left: 362px; top: 19px; width: 160px; }
.n2 { left: 126px; top: 212px; width: 216px; height: 61px; }
.n3 { left: 233px; top: 356px; width: 198px; height: 75px; }
.n4 { left: 656px; top: 121px; width: 249px; height: 97px; }
.prices { position: relative; display: flex; flex-direction: column; justify-content: space-between; height: calc(100% + 2px); margin-top: 1px; line-height: 13px; }
.prices > span { display: flex; align-items: center; gap: 3px; }
.prices > span::before { content: ""; width: 2px; height: 1px; background: #fff; }
.tags { position: absolute; left: 1px; right: 2px; top: 302px; line-height: 11px; color: #000; }
.tags b { display: block; padding-left: 4px; font-weight: normal; background: #fff; }
.tags .level { background: #48d1cc; }
.dates { display: flex; line-height: 15px; }
.dates span { position: relative; width: 64px; flex: none; padding-top: 1px; white-space: nowrap; }
.dates span::before { content: ""; position: absolute; left: 1px; top: 0; width: 1px; height: 3px; background: #fff; }
.chart .tabs { height: 21px; padding-left: 2px; padding-top: 2px; }
.pager { display: flex; gap: 13px; margin-left: auto; margin-right: 4px; }

.terminal { display: flex; height: 125px; flex: none; padding-top: 3px; border-bottom: 1px solid #a0a0a0; }
.strip { display: flex; flex-direction: column; align-items: center; width: 15px; flex: none; }
.strip button { margin: 1px 0 5px; }
.strip h2 { flex: 1; writing-mode: vertical-rl; transform: rotate(180deg); width: 13px; margin-bottom: 3px; padding-top: 3px; line-height: 13px; color: #4c5763; background: linear-gradient(#bccddd, #d9e5f3); }
.term-main { display: flex; flex-direction: column; flex: 1; min-width: 0; }
.term-body { display: flex; flex: 1; min-height: 0; border: 1px solid #a0a0a0; border-bottom: 1px solid #000; background: #fff; margin-right: 2px; }
.log-wrap { flex: 1; min-width: 0; overflow: hidden; }
.log th:first-child { width: 159px; }
.log td:last-child { padding-left: 5px; }
.log tr:nth-child(odd) td { background: #ebebeb; }
.log td svg { width: 9px; height: 9px; margin: 0 8px 0 5px; vertical-align: -1px; }
.terminal .tabs { padding-left: 4px; }
.terminal .tabs b { color: #e8202a; font-size: 9px; margin: 3px 0 0 2px; }

.status { display: flex; align-items: center; height: 21px; flex: none; padding-left: 2px; }
.status span { display: flex; align-items: center; height: 18px; padding-left: 4px; border-left: 1px solid #a8a8a8; }
.status .help { flex: 1; padding: 0; border: 0; }
.status .c1 { width: 116px; }
.status .c2 { width: 102px; }
.status .c3 { width: 70px; }
.status .c4 { width: 66px; }
.status .net { width: 161px; gap: 41px; }
.net svg { width: 24px; height: 14px; }
```
FILE: chart.js
```js
// Coordinates are in thirds of a pixel, measured from the plot origin shifted by (9, 18).
const NS = 'http://www.w3.org/2000/svg';
const svg = document.getElementById('series');
const X0 = 9, Y0 = 18;
const px = v => Math.round((v - X0) / 3);
const py = v => Math.round((v - Y0) / 3);
function add(name, attrs) {
  const el = document.createElementNS(NS, name);
  for (const k in attrs) el.setAttribute(k, attrs[k]);
  svg.appendChild(el);
}
// u = rising, d = falling; high, body top, body bottom, low
const candles = `u615,625,683,755 u570,570,624,654 u492,498,573,617 d462,498,510,540 d450,510,537,555 u441,513,537,575
u393,441,516,525 d387,441,477,488 u423,441,486,515 d428,441,473,530 u348,441,473,489 d372,429,465,471 d462,471,480,558
u306,309,480,494 d273,300,378,381 u300,315,378,393 u291,326,329,366 d312,321,363,402 d351,363,441,446 u357,363,450,453
d342,354,399,408 u273,318,399,404 u264,288,321,357 u264,282,291,305 u222,246,285,297 d186,243,261,270 d231,261,282,321
u222,270,279,285 d243,264,309,339 u261,282,309,335 u189,201,282,317 u153,177,204,225 u159,165,180,210 u96,102,171,182
d102,102,135,144 d90,123,144,168 d135,141,198,207 d183,195,276,279 d240,270,300,303 d264,294,342,357 d315,318,399,405
u375,384,411,417 d360,387,522,543 u543,549,600,660 u420,537,546,603 d474,528,561,567 d540,564,699,708 u570,642,705,708
u618,636,648,747 d591,630,639,687 d591,639,687,714 d672,699,750,789 d708,741,849,888 d813,837,855,888 u768,858,864,876
d798,861,894,900 u804,822,897,912 d789,819,870,912 d849,867,906,939 d870,897,1020,1020 d1020,1020,1104,1164
d1044,1089,1110,1143 d1074,1113,1188,1206 u1068,1146,1176,1188 u1005,1056,1134,1188 u969,981,1071,1083 d939,966,984,1026
u906,963,984,1017 d966,969,1164,1167 d1110,1161,1308,1332 u1098,1203,1314,1365 d1182,1194,1245,1284 u1206,1218,1239,1311
d1188,1218,1365,1389 u1152,1197,1371,1398 u1086,1086,1203,1254 d930,1092,1110,1128 u921,954,1110,1137 u774,816,960,987
d810,813,942,960 d927,942,1041,1065 d960,1032,1047,1098 u882,897,1053,1071 u717,738,909,939 d729,738,807,835
d786,807,900,903 d867,906,927,1017 u855,879,933,957 d845,879,924,951 u836,867,926,939 d855,861,939,972 d930,933,942,945`.split(/\s+/);
const average = [[10,718],[82,632],[130,605],[154,593],[202,553],[250,535],[298,499],[322,477],[394,430],[418,419],[466,408],[514,393],[562,366],[610,332],[634,327],[658,318],[706,318],[730,303],[754,283],[778,268],[826,233],[850,221],[874,213],[922,217],[970,232],[994,238],[1018,256],[1042,283],[1066,306],[1090,342],[1114,388],[1162,464],[1210,527],[1258,600],[1306,675],[1330,702],[1354,722],[1426,803],[1474,873],[1498,917],[1546,973],[1570,984],[1618,1003],[1642,1018],[1666,1059],[1714,1111],[1762,1147],[1786,1154],[1810,1147],[1858,1139],[1882,1123],[1906,1122],[1930,1125],[1954,1118],[1978,1088],[2002,1050],[2026,1017],[2074,960],[2098,933],[2122,920],[2142,905],[2170,903],[2194,909]];
const slow = [[10,879],[58,845],[106,808],[145,780],[178,758],[226,708],[274,662],[298,643],[322,615],[346,598],[394,558],[442,523],[466,508],[514,490],[562,465],[610,433],[658,403],[706,382],[754,362],[802,331],[850,311],[898,292],[922,290],[946,282],[994,283],[1042,298],[1090,314],[1162,340],[1210,365],[1258,402],[1330,466],[1378,502],[1426,562],[1500,668],[1560,752],[1620,820],[1654,855],[1738,939],[1762,971],[1834,1020],[1882,1036],[1930,1051],[1954,1056],[1978,1056],[2014,1050],[2050,1053],[2086,1052],[2122,1042],[2170,1025],[2194,1019]];
const sar = {0:562,1:755,2:755,3:730,4:688,5:643,6:592,8:523,9:388,11:529,12:349,13:556,14:556,15:529,16:502,17:481,18:460,19:274,20:283,21:451,22:442,23:425,24:409,25:382,26:343,28:187,29:196,30:337,31:334,32:316,33:301,34:271,35:244,37:91,38:100,39:118,40:154,41:205,43:343,44:361,45:421,46:421,47:475,48:541,49:571,50:592,51:592,52:592,53:673,54:709,55:769,56:769,57:910,58:790,59:790,60:811,61:865,62:911,63:966,64:1204,65:1195,66:1186,67:1150,68:907,69:907,70:949,71:1009,72:1063,73:1108,74:1388,75:1396,76:1396,77:1327,78:1246,79:1135,83:1096,84:1078,85:1060,86:1042,87:1027,88:1015,89:1000,90:988,91:974};

add('rect', {x: 0, y: 307, width: '100%', height: 1, fill: '#404040'});
const points = a => a.map(([x, y]) => px(x) + ',' + py(y)).join(' ');
add('polyline', {points: points(slow), fill: 'none', stroke: '#ffff00', 'stroke-width': 2});
add('polyline', {points: points(average), fill: 'none', stroke: '#ffffff', 'stroke-width': 2});
candles.forEach((c, i) => {
  const [h, t, b, l] = c.slice(1).split(',').map(Number);
  const fill = c[0] === 'u' ? '#00ff00' : '#ff0000', x = i * 8;
  add('rect', {x, y: py(h), width: 1, height: py(l) - py(h), fill});
  add('rect', {x: x - 2, y: py(t), width: 5, height: Math.max(1, py(b) - py(t)), fill});
});
for (const i in sar) {
  const x = i * 8, y = py(sar[i]);
  add('path', {d: `M${x - 1} ${y}h3v1h-3zM${x} ${y - 1}h1v3h-1z`, fill: '#fff'});
}
add('rect', {x: 0, y: 317, width: '100%', height: 2, fill: '#48d1cc'});
add('path', {d: 'M779 226h10v14h5L784 251 774 240h5z', fill: '#000', stroke: '#fff', 'stroke-width': 2});
add('path', {d: 'M742 0h9l-4.500 5z', fill: '#808080'});
```
